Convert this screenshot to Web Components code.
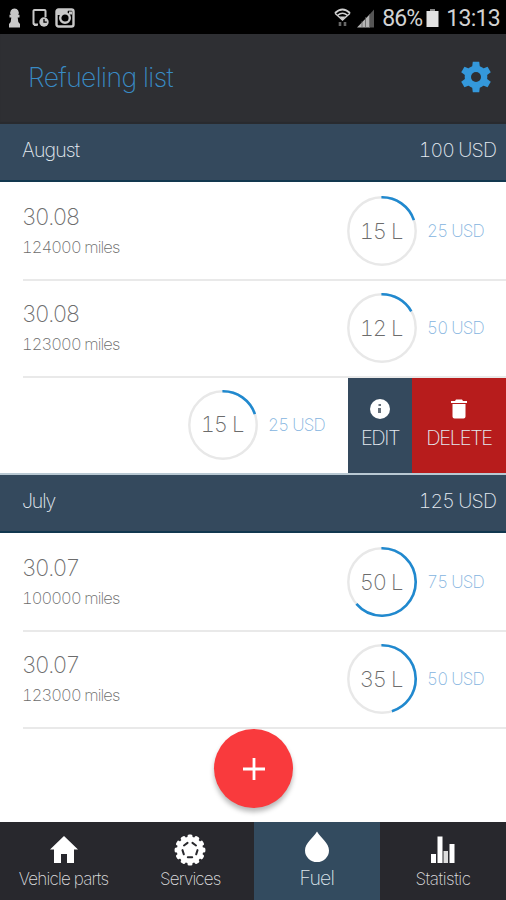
<!DOCTYPE html>
<html lang="en">
<head>
<meta charset="utf-8">
<title>Refueling list</title>
<style>
html,body{margin:0;height:100%;overflow:hidden;background:#fff}
body{font-family:Inter,"Liberation Sans",sans-serif;font-weight:200;font-variant-numeric:tabular-nums}
</style>
</head>
<body>
<fuel-app></fuel-app>
<script>
const define = (name, render) => customElements.define(name, class extends HTMLElement {
  connectedCallback() {
    if (this.shadowRoot) return;
    this.attachShadow({ mode: 'open' }).innerHTML = render(this);
  }
});

define('status-bar', () => `
<style>
:host{display:flex;height:34px;background:#000;color:#d2d2d2;align-items:center;box-sizing:border-box;padding:2px 6px 0 8px;font:400 23px/32px Roboto,sans-serif}
.spacer{flex:1}
svg{display:block;flex:none}
.pct{margin-left:7px;letter-spacing:-.95px;margin-top:2px}
.time{margin-left:7px;letter-spacing:-.7px;margin-top:2px}
</style>
<svg width="13" height="20" viewBox="0 0 13 20" fill="#c8c8c8"><path d="M6.500 .5a4.200 4.200 0 0 1 3.700 6.300H11.500v2.700H9.700L10.300 14l1.700 2v3.500H1V16l1.700-2 .6-4.500H1.500V6.800h1.300A4.200 4.200 0 0 1 6.500 .5z"/></svg>
<svg style="margin-left:11px" width="17" height="20" viewBox="0 0 17 20"><path d="M6 16.500H2.500a1 1 0 0 1-1-1V3a1 1 0 0 1 1-1h10a1 1 0 0 1 1 1v6" fill="none" stroke="#c8c8c8" stroke-width="2"/><path d="M2 15l4 3H2z" fill="#c8c8c8"/><circle cx="12" cy="14" r="4.700" fill="#c8c8c8"/><path d="M12 11v3.200h2.800" fill="none" stroke="#000" stroke-width="1.300"/></svg>
<svg style="margin-left:6px" width="20" height="20" viewBox="0 0 20 20"><rect x="1.500" y="1.500" width="17" height="17" rx="2" fill="none" stroke="#c8c8c8" stroke-width="2.400"/><path d="M2 2h11l-1 5H2z" fill="#c8c8c8"/><rect x="14" y="3.500" width="3" height="3" fill="#c8c8c8"/><circle cx="10" cy="10" r="4.800" fill="#000" stroke="#c8c8c8" stroke-width="2.400"/></svg>
<span class="spacer"></span>
<svg style="margin-right:1px" width="17" height="20" viewBox="0 0 17 20" fill="none" stroke="#d0d0d0" stroke-width="1.800"><path d="M1 5Q8.500-2 16 5"/><path d="M3.800 7.200Q8.500 3.300 13.200 7.200" stroke-width="1.500"/><path d="M1 5.200L8.500 12l7.500-6.800" stroke-width="1.400"/><path d="M5.500 8.600h6l-3 3.400z" fill="#d0d0d0" stroke="none"/><path d="M6 14v4M11 14v4" stroke="#666" stroke-width="2.600"/></svg>
<svg style="margin-left:4px" width="19" height="19" viewBox="0 0 19 19"><path d="M1 18.500L14 5v13.500z" fill="#b4b4b4"/><path d="M14 5l4-4.500v18h-4z" fill="#555"/><path d="M9.500 8v10M6 12v6M13.500 6v12" stroke="#555" stroke-width=".7"/></svg>
<span class="pct">86%</span>
<svg style="margin-left:4px" width="13" height="18" viewBox="0 0 13 18"><path d="M4 0h5v2h3.500v16H.5V2H4z" fill="#e2e2e2"/><path d="M4 0h5v2H4z" fill="#888"/></svg>
<span class="time">13:13</span>`);

define('title-bar', () => `
<style>
:host{display:flex;height:90px;background:#2e2f33;align-items:center;justify-content:space-between;box-sizing:border-box;padding:0 14px 5px 28px;box-shadow:inset 0 -2px 1px #292b2f}
h1{margin:0;color:#398bc5;font-size:26.500px;line-height:36px;font-weight:200;letter-spacing:-.6px;white-space:nowrap}
svg{display:block;margin-top:1px}
</style>
<h1><slot></slot></h1>
<svg width="32" height="32" viewBox="0 0 32 32"><g fill="#3498db"><circle cx="16" cy="16" r="11.300"/><path d="M12 7l.8-6.200h6.400L20 7v18l-.8 6.200h-6.400L12 25z"/><path d="M12 7l.8-6.200h6.400L20 7v18l-.8 6.200h-6.400L12 25z" transform="rotate(60 16 16)"/><path d="M12 7l.8-6.200h6.400L20 7v18l-.8 6.200h-6.400L12 25z" transform="rotate(120 16 16)"/></g><circle cx="16" cy="16" r="5" fill="#2e2f33"/></svg>`);

define('month-header', el => `
<style>
:host{display:flex;height:58px;box-sizing:border-box;background:#34495d;border-bottom:2px solid #12384f;align-items:center;justify-content:space-between;padding:0 10px 4px 22px;color:#e4ebf2;font-size:19.500px;line-height:26px;font-weight:250}
.m{letter-spacing:var(--month-spacing,-.85px)}
.t{letter-spacing:-.85px}
</style>
<span class="m"><slot></slot></span><span class="t">${el.getAttribute('total')}</span>`);

define('volume-ring', el => `
<style>
:host{display:grid;width:70px;height:70px;place-items:center}
svg,span{grid-area:1/1}
span{color:#6c6c6c;font-size:22px;line-height:28px;letter-spacing:-1px;white-space:nowrap;margin:0 2px 1px 0}
</style>
<svg width="70" height="70" viewBox="0 0 70 70" fill="none"><circle cx="35" cy="35" r="33.700" stroke="#e8e8e8" stroke-width="2.400"/><circle cx="35" cy="35" r="33.700" stroke="#2089cf" stroke-width="2.600" pathLength="100" stroke-dasharray="${el.getAttribute('share')} 100" transform="rotate(-91 35 35)"/></svg>
<span><slot></slot></span>`);

define('fuel-row', el => `
<style>
:host{display:flex;height:97px;box-sizing:border-box;align-items:center;padding:1px 22px 0 22px;color:#6c6c6c;position:relative}
:host::after{content:"";position:absolute;left:23px;right:0;bottom:-1.500px;height:2px;background:#e9e9e9}
.info{flex:1;padding-top:2px}
.date{font-size:22.500px;line-height:30px;letter-spacing:-1.450px}
.miles{font-size:16.500px;line-height:30px;letter-spacing:-.88px}
.price{width:57px;margin-left:10px;color:#84b4e0;font-size:17px;letter-spacing:-.78px;white-space:nowrap}
</style>
<div class="info"><div class="date">${el.getAttribute('date')}</div><div class="miles">${el.getAttribute('miles')} miles</div></div>
<volume-ring share="${el.getAttribute('share')}">${el.getAttribute('volume')} L</volume-ring>
<span class="price">${el.getAttribute('price')} USD</span>`);

define('row-action', el => `
<style>
:host{display:flex;flex-direction:column;align-items:center;box-sizing:border-box;padding-top:20px;color:#e5eaf0;font-size:20px;line-height:26px;font-weight:250;white-space:nowrap}
::slotted(svg){display:block;height:22px;margin-bottom:5px}
span{letter-spacing:var(--label-spacing,-1px)}
</style>
<slot name="icon"></slot><span>${el.getAttribute('label')}</span>`);

define('swiped-row', el => `
<style>
:host{display:flex;height:99px;box-sizing:border-box;align-items:center;padding:2px 0 3px 188px;border-bottom:2px solid #b9c9d3}
.price{margin:2px 0 0 10px;color:#84b4e0;font-size:17px;letter-spacing:-.78px;width:80px;white-space:nowrap}
volume-ring{margin-top:1px}
row-action{height:95px;align-self:flex-start}
.edit{width:64px;background:#34495d;--label-spacing:-1.400px}
.delete{width:94px;background:#b71c1c;--label-spacing:-1.300px}
</style>
<volume-ring share="${el.getAttribute('share')}">${el.getAttribute('volume')} L</volume-ring>
<span class="price">${el.getAttribute('price')} USD</span>
<row-action class="edit" label="EDIT"><svg slot="icon" width="22" height="22" viewBox="0 0 22 22"><circle cx="11" cy="11" r="10" fill="#fff"/><path d="M9.500 6h2.500v2H9.500zM9 10h3v5H9z" fill="#68727c"/></svg></row-action>
<row-action class="delete" label="DELETE"><svg slot="icon" width="18" height="22" viewBox="0 0 18 22" fill="#fff"><path d="M1 3h4l1-1.500h6L13 3h4v2H1zM2.500 6h13v12.500a2 2 0 0 1-2 2h-9a2 2 0 0 1-2-2z"/></svg></row-action>`);

define('add-button', () => `
<style>
:host{display:grid;place-items:center;width:79px;height:79px;border-radius:50%;background:#f93a3d;box-shadow:0 4px 5px rgba(0,0,0,.28)}
</style>
<svg width="22" height="22" viewBox="0 0 22 22" stroke="#fff" stroke-width="2.800"><path d="M0 11h22M11 0v22"/></svg>`);

define('nav-tab', () => `
<style>
:host{display:flex;flex-direction:column;align-items:center;background:#28282d;color:#dcdcde;box-sizing:border-box;padding-top:12px;font-size:17px;line-height:27px;font-weight:250;white-space:nowrap;letter-spacing:var(--label-spacing,-.8px)}
:host([active]){background:#334b5f;padding-top:9px;font-size:19.500px;line-height:30px;color:#dce5ec}
::slotted(svg){display:block;height:32px}
</style>
<slot name="icon"></slot><slot></slot>`);

const tooth = n => Array.from({ length: n }, (_, i) => `<rect x="13.500" y=".6" width="5" height="7" rx="1.500" transform="rotate(${i * 360 / n} 16 16)"/>`).join('');
const holes = Array.from({ length: 5 }, (_, i) => `<path d="M13.800 23.200h4.400" transform="rotate(${i * 72} 16 16)"/>`).join('');

define('tab-bar', () => `
<style>
:host{display:grid;grid-template-columns:127px 126.500px 126.500px 126px;height:78px;box-sizing:border-box}
</style>
<nav-tab><svg slot="icon" width="30" height="32" viewBox="0 0 30 32" fill="#fff"><path d="M15 2L1 15.500h4V29h7v-9h6v9h7V15.500h4z"/></svg>Vehicle parts</nav-tab>
<nav-tab style="--label-spacing:-.85px"><svg slot="icon" width="32" height="32" viewBox="0 0 32 32"><g fill="#fff">${tooth(12)}<circle cx="16" cy="16" r="13.200"/></g><g fill="none" stroke="#28282d" stroke-width="2" stroke-linecap="round">${holes}</g></svg>Services</nav-tab>
<nav-tab active><svg slot="icon" width="28" height="32" viewBox="0 0 28 32" fill="#fff"><path d="M14 .5C18 7 26 12 26 19.500A12 11.500 0 0 1 2 19.500C2 12 10 7 14 .5z"/></svg>Fuel</nav-tab>
<nav-tab style="--label-spacing:-.45px"><svg slot="icon" width="26" height="32" viewBox="0 0 26 32"><path d="M1 20h5v9H1zM7.500 2.500h5V29h-5zM19.500 10h5v19h-5z" fill="#fff"/><path d="M13.500 17h4.500v12h-4.500z" fill="#ddd"/></svg>Statistic</nav-tab>`);

define('fuel-app', () => `
<style>
:host{display:flex;flex-direction:column;width:506px;height:900px;background:#fff;overflow:hidden;position:relative}
main{flex:1;min-height:0}
add-button{position:absolute;left:214px;top:729px}
.july{--month-spacing:-1.100px}
</style>
<status-bar></status-bar>
<title-bar>Refueling list</title-bar>
<main>
<month-header total="100 USD">August</month-header>
<fuel-row date="30.08" miles="124000" volume="15" share="20" price="25"></fuel-row>
<fuel-row date="30.08" miles="123000" volume="12" share="17" price="50"></fuel-row>
<swiped-row volume="15" share="20" price="25"></swiped-row>
<month-header class="july" total="125 USD">July</month-header>
<fuel-row date="30.07" miles="100000" volume="50" share="64" price="75"></fuel-row>
<fuel-row date="30.07" miles="123000" volume="35" share="45.500" price="50"></fuel-row>
</main>
<tab-bar></tab-bar>
<add-button></add-button>`);
</script>
</body>
</html>
